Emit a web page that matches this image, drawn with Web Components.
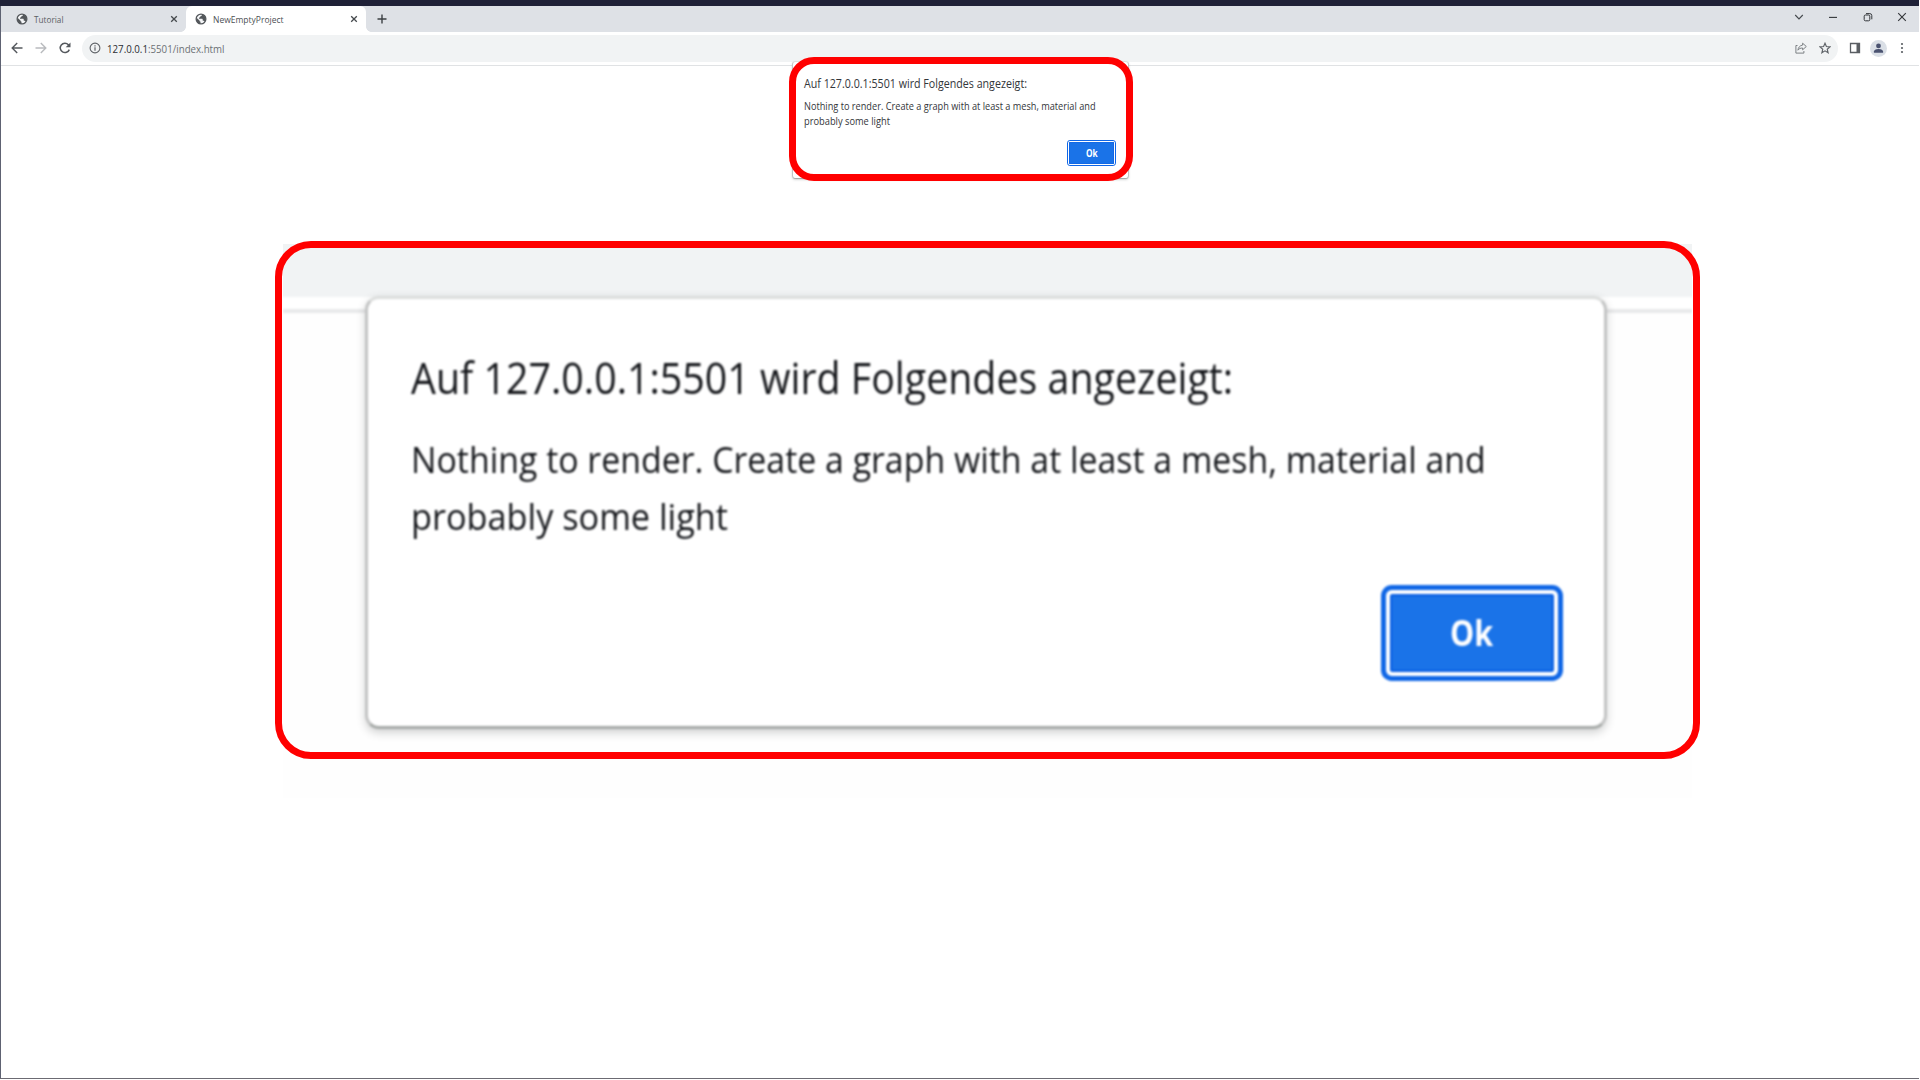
<!DOCTYPE html>
<html lang="de">
<head>
<meta charset="utf-8">
<title>NewEmptyProject</title>
<style>
html,body{margin:0;width:1920px;height:1080px;overflow:hidden;background:#fff;font-family:"Open Sans","Noto Sans",sans-serif}
</style>
</head>
<body>
<app-window></app-window>
<script>
const define = (name, html) => customElements.define(name, class extends HTMLElement {
  connectedCallback() {
    if (this.shadowRoot) return;
    const t = document.createElement('template');
    t.innerHTML = typeof html === 'function' ? html(this) : html;
    this.attachShadow({mode: 'open'}).append(t.content.cloneNode(true));
  }
});

// A single line of text set to an exact advance width.
define('fit-text', el => {
  const a = n => el.getAttribute(n);
  return `<style>:host{display:block;flex:none}svg{display:block;overflow:visible}</style>
  <svg width="${a('w')}" height="${a('h')}"><text x="0" y="${a('base')}" textLength="${a('w')}" lengthAdjust="spacingAndGlyphs" font-size="${a('size')}" font-weight="${a('weight') || 400}" fill="currentColor">${a('text')}</text></svg>`;
});

const icons = {
  globe: '<svg width="12" height="12" viewBox="0 0 24 24"><circle cx="12" cy="12" r="9.700" fill="#f4f5f7" stroke="#53575b" stroke-width="2.600"/><path fill="#53575b" d="M3 9.500l6 5.500c0 1.500.6 2.300 2 2.500V22C6 21.500 2 17 3 9.500zM14 2.500c0 2-.6 3.500-2.500 3.800-1.500.3-1.500 1.500-1.500 2.700H8v2.500h5.500c1.500 0 2 1 2 2.500v1.500h2c1 0 1.500.6 2 1.500C22.500 13 22 5 14 2.500z"/></svg>',
  close: '<svg width="8" height="8" viewBox="0 0 8 8"><path d="M1.200 1.200l5.600 5.600M6.800 1.200L1.200 6.800" stroke="#45494d" stroke-width="1.300"/></svg>',
  plus: '<svg width="10" height="10" viewBox="0 0 10 10"><path d="M5 .5v9M.5 5h9" stroke="#3c4043" stroke-width="1.400"/></svg>',
  back: '<svg width="12" height="12" viewBox="0 0 12 12"><path d="M11.500 6H1.500M6.200 1L1.200 6l5 5" fill="none" stroke="#55595e" stroke-width="1.400"/></svg>',
  forward: '<svg width="12" height="12" viewBox="0 0 12 12"><path d="M.5 6h10M5.800 1l5 5-5 5" fill="none" stroke="#b9bbbe" stroke-width="1.400"/></svg>',
  reload: '<svg width="12" height="12" viewBox="0 0 12 12"><path d="M10.300 7.600A4.700 4.700 0 1 1 9.400 2.700L10.600 4" fill="none" stroke="#55595e" stroke-width="1.500"/><path d="M11.500.5v4.800H6.700z" fill="#55595e"/></svg>',
  info: '<svg width="12" height="12" viewBox="0 0 12 12"><circle cx="6" cy="6" r="4.900" fill="none" stroke="#5f6368" stroke-width="1.100"/><path d="M6 5.300v3.400M6 3.200v1.300" stroke="#5f6368" stroke-width="1.200"/></svg>',
  share: '<svg width="12" height="12" viewBox="0 0 12 12"><path d="M2.500 3.500H.9v7.600h8V9" fill="none" stroke="#7c8084" stroke-width="1"/><path d="M7.600 1.200l3.700 3.300-3.700 3.300V6C5.500 6 4 6.600 2.900 8.200 3.200 5.600 4.800 3.500 7.600 3.100z" fill="none" stroke="#7c8084" stroke-width="1"/></svg>',
  star: '<svg width="12" height="12" viewBox="0 0 24 24"><path d="M12 2.500l2.800 6.600 7.200.6-5.500 4.700 1.700 7L12 17.600l-6.200 3.800 1.700-7L2 9.700l7.200-.6z" fill="none" stroke="#5f6368" stroke-width="2.300"/></svg>',
  panel: '<svg width="12" height="12" viewBox="0 0 12 12"><path d="M1.500 1.500h9v9h-9z" fill="none" stroke="#5a5e63" stroke-width="1.300"/><path d="M7.500 1H11v10H7.500z" fill="#5a5e63"/></svg>',
  user: '<svg width="17" height="17" viewBox="0 0 17 17"><circle cx="8.500" cy="8.500" r="8.500" fill="#dadfe6"/><circle cx="8.500" cy="5.900" r="2.400" fill="#4a5270"/><path d="M3.900 12.700v-1.100c0-1.700 3-2.500 4.600-2.500s4.600.8 4.600 2.500v1.100z" fill="#4a5270"/></svg>',
  more: '<svg width="4" height="12" viewBox="0 0 4 12"><g fill="#5a5e63"><circle cx="2" cy="2" r="1.100"/><circle cx="2" cy="6" r="1.100"/><circle cx="2" cy="10" r="1.100"/></g></svg>',
  chevron: '<svg width="10" height="10" viewBox="0 0 10 10"><path d="M1.200 3l3.800 4L8.800 3" fill="none" stroke="#45494d" stroke-width="1.100"/></svg>',
  min: '<svg width="10" height="10" viewBox="0 0 10 10"><path d="M1 5.400h8" stroke="#33363a" stroke-width="1.100"/></svg>',
  restore: '<svg width="10" height="10" viewBox="0 0 10 10"><rect x="1.200" y="3" width="5.600" height="5.800" rx="1.200" fill="none" stroke="#33363a"/><path d="M3 1.600h3.800a2 2 0 0 1 2 2v3.700" fill="none" stroke="#33363a"/></svg>',
  x: '<svg width="10" height="10" viewBox="0 0 10 10"><path d="M1.200 1.200l7.600 7.600M8.800 1.200L1.200 8.800" stroke="#33363a" stroke-width="1.100"/></svg>'
};
define('ui-icon', el => `<style>:host{display:block;flex:none}svg{display:block}</style>${icons[el.getAttribute('name')]}`);

define('browser-tab', `<style>
  :host{display:flex;align-items:center;box-sizing:border-box;width:179.500px;height:26px;padding:0 8px 0 9px;color:#5b5f64;border-radius:6px 6px 0 0;position:relative}
  :host([active]){background:#fff;color:#4b4f54}
  :host([active])::before,:host([active])::after{content:"";position:absolute;bottom:0;width:5px;height:5px;left:-5px;background:radial-gradient(circle at 0 0,transparent 4.500px,#fff 5px)}
  :host([active])::after{left:auto;right:-5px;background:radial-gradient(circle at 100% 0,transparent 4.500px,#fff 5px)}
  slot{display:block;flex:1;margin-left:6px}
  </style><ui-icon name="globe"></ui-icon><slot></slot><ui-icon name="close"></ui-icon>`);

define('tab-strip', `<style>
  :host{display:flex;height:26px;background:#dee1e6;padding-left:5.500px;align-items:center}
  ui-icon.plus{margin-left:11.500px}
  .controls{margin-left:auto;display:flex;gap:24.500px;margin-right:12px;margin-bottom:4px}
  </style>
  <browser-tab><fit-text w="29.5" h="14" base="10.6" size="9.800" text="Tutorial"></fit-text></browser-tab>
  <browser-tab active><fit-text w="70.5" h="14" base="10.6" size="9.800" text="NewEmptyProject"></fit-text></browser-tab>
  <ui-icon class="plus" name="plus"></ui-icon>
  <div class="controls"><ui-icon name="chevron"></ui-icon><ui-icon name="min"></ui-icon><ui-icon name="restore"></ui-icon><ui-icon name="x"></ui-icon></div>`);

define('tool-bar', `<style>
  :host{display:flex;align-items:center;height:33px;box-sizing:border-box;background:#fff;padding:0 0 1px 10px}
  .nav{display:flex;gap:12px;width:71px;flex:none}
  .omni{flex:none;width:1756px;height:27px;border-radius:14px;background:#f1f3f4;display:flex;align-items:center;box-sizing:border-box;padding:0 7.500px 0 7px}
  .url{display:flex;margin-left:6px;flex:1;color:#6d7175}
  .end{display:flex;gap:12px}
  .right{display:flex;align-items:center;gap:9.500px;margin-left:10.500px}
  </style>
  <div class="nav"><ui-icon name="back"></ui-icon><ui-icon name="forward"></ui-icon><ui-icon name="reload"></ui-icon></div>
  <div class="omni"><ui-icon name="info"></ui-icon>
    <div class="url"><fit-text w="117.500" h="15" base="11.700" size="10.700" text="<tspan fill='#2b2e32'>127.0.0.1</tspan>:5501/index.html"></fit-text></div>
    <div class="end"><ui-icon name="share"></ui-icon><ui-icon name="star"></ui-icon></div></div>
  <div class="right"><ui-icon name="panel"></ui-icon><ui-icon name="user"></ui-icon><ui-icon style="margin-left:3.500px" name="more"></ui-icon></div>`);

// JavaScript alert box; "scale" multiplies every measure.
define('alert-dialog', el => {
  const u = +el.getAttribute('scale'), n = v => (v * u).toFixed(2);
  const t = (w, h, b, s, text, weight) => `<fit-text w="${n(w)}" h="${n(h)}" base="${n(b)}" size="${n(s)}" weight="${weight || 400}" text="${text}"></fit-text>`;
  return `<style>
  :host{display:flex;flex-direction:column;box-sizing:border-box;width:${n(337)}px;height:${n(117.5)}px;background:#fff;border-radius:${n(3.8)}px;padding:0 ${n(11.1)}px 0 ${n(11.9)}px;color:var(--ink,#33363a);
    border:${n(.95)}px solid;border-color:#dcdedd #c3c4c4 #a6aaa8;
    box-shadow:0 ${n(1)}px ${n(2.2)}px rgba(60,66,64,.22)}
  .ok{align-self:flex-end;margin-top:${n(11.6)}px;box-sizing:border-box;width:${n(49.5)}px;height:${n(26.2)}px;flex:none;border:${n(1.4)}px solid #0f66e6;border-radius:${n(2.9)}px;background:#fff;padding:${n(1.15)}px;display:flex}
  .face{flex:1;background:#1a73e8;border-radius:${n(.8)}px;color:#fff;display:flex;justify-content:center;align-items:center;box-shadow:inset 0 0 0 ${n(.6)}px #0b60e4}
  </style>
  ${t(223, 35.3, 25.7, 11.9, 'Auf 127.0.0.1:5501 wird Folgendes angezeigt:')}
  ${t(291.5, 15.3, 11.8, 10, 'Nothing to render. Create a graph with at least a mesh, material and')}
  ${t(86, 15.3, 11.8, 10, 'probably some light')}
  <div class="ok"><div class="face">${t(11.7, 12, 9.6, 9.7, 'Ok', 700)}</div></div>`;
});

// Enlarged part of the page with the dialog hanging over the toolbar edge.
define('zoom-view', `<style>
  :host{display:block;background:#fefefe;height:554px;overflow:hidden}
  .soft{filter:blur(.8px);height:100%;margin:-3px;padding:3px;background:linear-gradient(#f1f3f4 56px,#fefefe 56px)}
  .band{height:53px;background:#f1f3f4}
  .gap{height:12px;background:#fff}
  .line{height:4px;background:#e8e9ea}
  alert-dialog{position:relative;top:-17px;margin-left:81.500px;--ink:#15171b}
  </style><div class="soft"><div class="band"></div><div class="gap"></div><div class="line"></div>
  <alert-dialog scale="3.687"></alert-dialog></div>`);

define('red-frame', `<style>:host{display:block;box-sizing:border-box;border:7px solid #f00;pointer-events:none}</style>`);

define('app-window', `<style>
  :host{display:flex;flex-direction:column;box-sizing:border-box;width:1919px;height:1079px;position:relative;overflow:hidden;background:#fff}
  .top{height:6px;background:#1f2137;flex:none}
  .body{flex:1;border-left:1px solid #5e6272;border-bottom:1px solid #6c6b73;display:flex;flex-direction:column}
  .rule{height:1px;background:#e0e2e4;flex:none}
  .page{flex:1}
  .over{position:absolute}
  </style>
  <div class="top"></div>
  <div class="body"><tab-strip></tab-strip><tool-bar></tool-bar><div class="rule"></div><div class="page"></div></div>
  <alert-dialog class="over" scale="1" style="left:791.500px;top:61.300px"></alert-dialog>
  <red-frame class="over" style="left:789px;top:57px;width:344px;height:124px;border-radius:25px"></red-frame>
  <zoom-view class="over" style="left:283px;top:244px;width:1409px"></zoom-view>
  <red-frame class="over" style="left:275px;top:241px;width:1425px;height:518px;border-radius:36px"></red-frame>`);
</script>
</body>
</html>
